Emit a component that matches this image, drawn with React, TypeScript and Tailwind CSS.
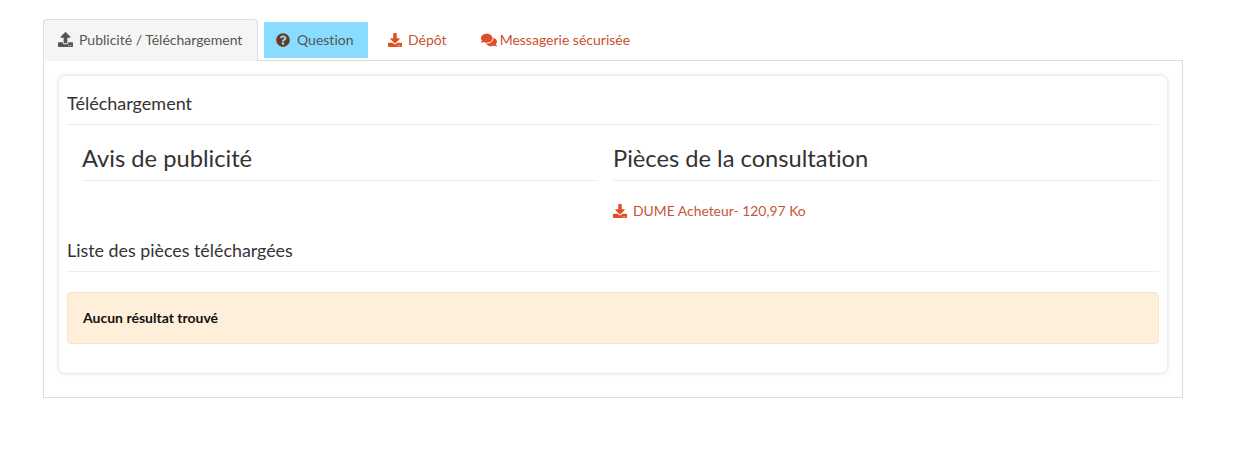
import { FaComments, FaDownload, FaQuestionCircle, FaUpload } from 'react-icons/fa';

const linkTab = 'flex items-center h-[36px] text-[14px] text-[#cb4f2f]';

export default function App() {
  return (
    <div className="w-[1234px] h-[451px] bg-white pl-[43px] pt-[19px] font-['Lato',sans-serif] text-[#333] [font-variant-ligatures:none]">
      <div className="w-[1140px]">
        {/* Tabs */}
        <div className="flex items-start h-[42px] relative z-10">
          <div className="flex items-center w-[215px] h-[42px] pl-[14px] pb-[2px] bg-[#f5f5f5] border border-[#ddd] border-b-0 rounded-t-[4px] text-[14px] text-[#555]">
            <FaUpload className="text-[15px] text-[#555] mr-[6px]" />
            Publicité / Téléchargement
          </div>
          <div className="flex items-center w-[104px] h-[36px] mt-[3px] ml-[6px] pl-[12px] pb-[1px] bg-[#87dcff] text-[14px] text-[#555]">
            <FaQuestionCircle className="text-[14px] text-[#6b3a22] mr-[7px]" />
            Question
          </div>
          <div className={`${linkTab} mt-[3px] ml-[20px] pb-[1px]`}>
            <FaDownload className="text-[14px] text-[#e04e25] mr-[6px]" />
            Dépôt
          </div>
          <div className={`${linkTab} mt-[3px] ml-[34px] pb-[1px]`}>
            <FaComments className="text-[16px] text-[#e04e25] mr-[3px]" />
            Messagerie sécurisée
          </div>
        </div>

        {/* Panel */}
        <div className="-mt-px h-[338px] border border-[#ddd] bg-white px-[15px] pt-[15px]">
          <div className="h-[297px] rounded-[6px] bg-white px-[8px] shadow-[0_0_4px_rgba(0,0,0,0.18)]">
            <div className="h-[49px] flex items-end pb-[7px] border-b border-[#eee] text-[18px] text-[#333]">
              Téléchargement
            </div>
            <div className="flex">
              <div className="ml-[15px] w-[516px]">
                <h2 className="h-[56px] flex items-end pb-[3px] border-b border-[#eee] text-[23.7px] font-normal">
                  Avis de publicité
                </h2>
              </div>
              <div className="ml-[15px] flex-1">
                <h2 className="h-[56px] flex items-end pb-[3px] border-b border-[#eee] text-[23.7px] font-normal">
                  Pièces de la consultation
                </h2>
                <div className="flex items-center h-[20px] mt-[20px] text-[13.9px] text-[#c5553a]">
                  <FaDownload className="text-[14px] text-[#e04e25] mr-[6px]" />
                  DUME Acheteur- 120,97 Ko
                </div>
              </div>
            </div>
            <div className="h-[51px] flex items-end pb-[7px] border-b border-[#eee] text-[17.85px]">
              Liste des pièces téléchargées
            </div>
            <div className="mt-[20px] h-[52px] flex items-center pl-[15px] pb-[2px] rounded-[4px] border border-[#fae3c4] bg-[#feefda] text-[14px] font-bold text-[#111]">
              Aucun résultat trouvé
            </div>
          </div>
        </div>
      </div>
    </div>
  );
}
